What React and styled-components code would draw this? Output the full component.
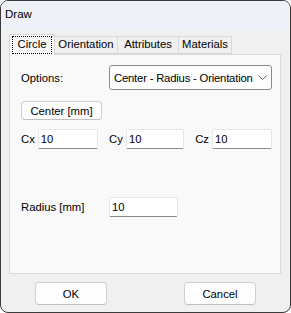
import React from "react";
import styled, { createGlobalStyle } from "styled-components";

const Global = createGlobalStyle`
  html, body { margin: 0; padding: 0; background: #ffffff; }
  body { font-family: "Liberation Sans", Arial, sans-serif; font-size: 11.3px; color: #000; }
`;

const Window = styled.div`
  box-sizing: border-box;
  width: 291px;
  height: 313px;
  border: 1px solid #3a3a3a;
  border-radius: 8px;
  background: #f0f0f0;
  overflow: hidden;
  display: flex;
  flex-direction: column;
`;

const TitleBar = styled.div`
  height: 29px;
  background: #eef2f8;
  display: flex;
  align-items: center;
  padding-left: 4px;
  padding-bottom: 3px;
  box-sizing: border-box;
  font-size: 11.5px;
  color: #000;
`;

const Body = styled.div`
  flex: 1;
  padding: 4px 8px 0 8px;
  display: flex;
  flex-direction: column;
`;

const TabRow = styled.div`
  display: flex;
  align-items: flex-end;
  height: 20px;
  position: relative;
  z-index: 1;
`;

const Tab = styled.div`
  box-sizing: border-box;
  width: ${(p) => p.$w};
  height: ${(p) => (p.$active ? "21px" : "18px")};
  margin-bottom: ${(p) => (p.$active ? "-1px" : "0")};
  border: 1px solid #d9d9d9;
  border-bottom: ${(p) => (p.$active ? "none" : "1px solid #d9d9d9")};
  margin-left: ${(p) => (p.$first ? "0" : "-1px")};
  background: ${(p) => (p.$active ? "#f9f9f9" : "#f0f0f0")};
  display: flex;
  align-items: center;
  justify-content: center;
  line-height: 1;
`;

const FocusText = styled.span`
  outline: 1px dotted #000;
  padding: 2px 5px 3px 5px;
`;

const Panel = styled.div`
  box-sizing: border-box;
  width: 272px;
  height: 220px;
  background: #f9f9f9;
  border: 1px solid #d9d9d9;
  padding: 10px 8px 0 11px;
  display: flex;
  flex-direction: column;
`;

const Row = styled.div`
  display: flex;
  align-items: center;
  justify-content: ${(p) => p.$justify || "flex-start"};
  margin-top: ${(p) => p.$mt || "0"};
`;

const Label = styled.span`
  width: ${(p) => p.$w || "auto"};
  color: #000;
  flex-shrink: 0;
`;

const Select = styled.div`
  box-sizing: border-box;
  width: 163px;
  height: 25px;
  border: 1px solid #8a8a8a;
  border-radius: 3px;
  background: #fdfdfd;
  display: flex;
  align-items: center;
  justify-content: space-between;
  padding: 0 4px 0 4px;
  white-space: nowrap;
  letter-spacing: -0.2px;
`;

const Button = styled.div`
  box-sizing: border-box;
  width: ${(p) => p.$w};
  height: ${(p) => p.$h};
  border: 1px solid #d0d0d0;
  border-bottom-color: #c0c0c0;
  border-radius: 4px;
  background: #fdfdfd;
  display: flex;
  align-items: center;
  justify-content: center;
`;

const Input = styled.div`
  box-sizing: border-box;
  width: ${(p) => p.$w};
  height: 20px;
  background: #fff;
  border: 1px solid #e6e6e6;
  border-bottom: 1px solid #8a8a8a;
  border-radius: 2px;
  display: flex;
  align-items: center;
  padding-left: 2px;
`;

const CoordGroup = styled.div`
  display: flex;
  align-items: center;
  gap: 3px;
`;

const Footer = styled.div`
  display: flex;
  justify-content: space-between;
  padding: 8px 26px 0 26px;
`;

const Chevron = () => (
  <svg width="9" height="5" viewBox="0 0 9 5">
    <path d="M0.5 0.5 L4.5 4.5 L8.5 0.5" fill="none" stroke="#606060" strokeWidth="1" />
  </svg>
);

export default function App() {
  return (
    <>
      <Global />
      <Window>
        <TitleBar>Draw</TitleBar>
        <Body>
          <TabRow>
            <Tab $active $first $w="46px">
              <FocusText>Circle</FocusText>
            </Tab>
            <Tab $w="64px">Orientation</Tab>
            <Tab $w="62px">Attributes</Tab>
            <Tab $w="54px">Materials</Tab>
          </TabRow>
          <Panel>
            <Row $justify="space-between">
              <Label>Options:</Label>
              <Select>
                <span>Center - Radius - Orientation</span>
                <Chevron />
              </Select>
            </Row>
            <Row $mt="11px">
              <Button $w="81px" $h="19px">Center [mm]</Button>
            </Row>
            <Row $mt="9px" $justify="space-between">
              <CoordGroup>
                <Label>Cx</Label>
                <Input $w="60px">10</Input>
              </CoordGroup>
              <CoordGroup>
                <Label>Cy</Label>
                <Input $w="58px">10</Input>
              </CoordGroup>
              <CoordGroup>
                <Label>Cz</Label>
                <Input $w="60px">10</Input>
              </CoordGroup>
            </Row>
            <Row $mt="48px">
              <Label $w="88px">Radius [mm]</Label>
              <Input $w="69px">10</Input>
            </Row>
          </Panel>
          <Footer>
            <Button $w="72px" $h="23px">OK</Button>
            <Button $w="72px" $h="23px">Cancel</Button>
          </Footer>
        </Body>
      </Window>
    </>
  );
}
